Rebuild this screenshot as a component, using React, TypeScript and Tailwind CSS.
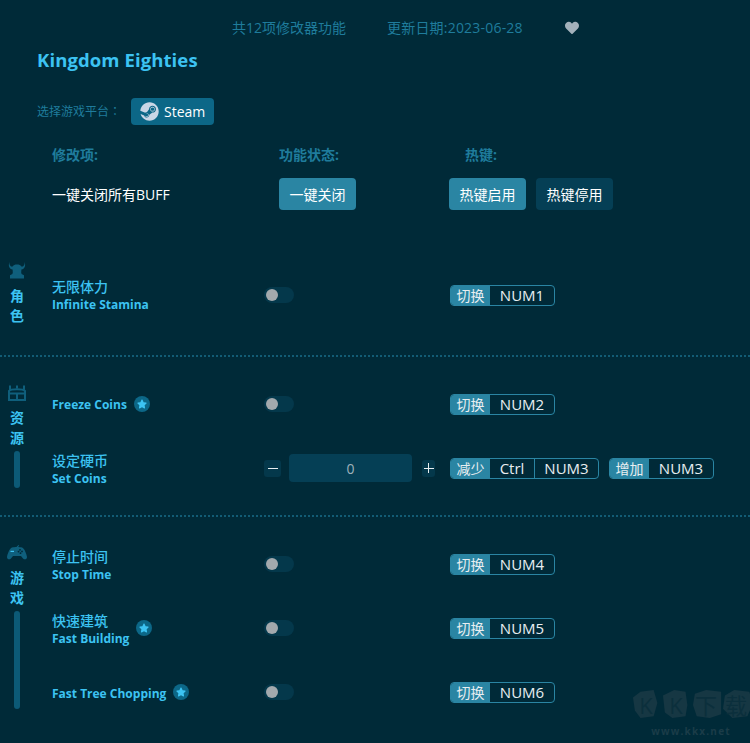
import React from "react";
import { FaSteam, FaHeart, FaStar } from "react-icons/fa";

const font = "font-['Open_Sans','Noto_Sans_CJK_SC',sans-serif]";

function Star() {
  return (
    <span className="flex h-4 w-4 shrink-0 items-center justify-center rounded-full bg-[#0c6787] text-[#3cc3f2]">
      <FaStar className="h-[10px] w-[10px]" />
    </span>
  );
}

function Toggle() {
  return (
    <div className="flex h-4 w-[30px] items-center rounded-full bg-[#04384b] pl-[2px]">
      <div className="h-3 w-3 rounded-full bg-[#a3a9ad]" />
    </div>
  );
}

function Hotkey({ label, keys }: { label: string; keys: { k: string; w: string }[] }) {
  return (
    <div className="flex h-[21px] overflow-hidden rounded-[4px] border border-[#2a85a3] text-[15px] leading-[19px] text-[#e8eef1]">
      <span className="w-[39px] bg-[#2a85a3] text-center text-[14px]">{label}</span>
      {keys.map((x, i) => (
        <span key={i} className={`${x.w} ${i > 0 ? "border-l border-[#2a85a3]" : ""} text-center`}>
          {x.k}
        </span>
      ))}
    </div>
  );
}

function Stepper() {
  return (
    <div className="flex items-center">
      <div className="flex h-[17px] w-[17px] items-center justify-center rounded-[3px] bg-[#04384b]">
        <div className="h-px w-[10px] bg-[#e8eef1]" />
      </div>
      <div className="ml-2 flex h-[28px] w-[123px] items-center justify-center rounded-[4px] bg-[#053f55] text-[14px] text-[#9fb2bb]">
        0
      </div>
      <div className="relative ml-[10px] flex h-[17px] w-[13px] items-center justify-center rounded-[3px] bg-[#04384b]">
        <div className="h-px w-[10px] bg-[#e8eef1]" />
        <div className="absolute h-[10px] w-px bg-[#e8eef1]" />
      </div>
    </div>
  );
}

function Row({
  cn,
  en,
  star,
  stepper,
  nudge,
  children,
}: {
  cn?: string;
  en: string;
  star?: boolean;
  stepper?: boolean;
  nudge?: boolean;
  children: React.ReactNode;
}) {
  return (
    <div className="flex h-16 items-center">
      <div className="flex w-[212px] items-center gap-[7px]">
        <div className={`text-[#3cc3f2] ${nudge ? "translate-y-px" : ""}`}>
          {cn && <div className="text-[14px] leading-[18px] font-medium">{cn}</div>}
          <div className="text-[12px] leading-[17px] font-bold">{en}</div>
        </div>
        {star && <Star />}
      </div>
      <div className="w-[186px]">{stepper ? <Stepper /> : <Toggle />}</div>
      <div className="flex gap-[10px]">{children}</div>
    </div>
  );
}

function HelmetIcon() {
  return (
    <svg width="18" height="17" viewBox="0 0 18 17" fill="#0f5f7c">
      <path d="M1.5 0 C1 2.5 2 4.2 4.2 4.8 C5.4 3.2 7 2.6 9 2.6 C11 2.6 12.6 3.2 13.8 4.8 C16 4.2 17 2.5 16.5 0 C18 3.5 16.8 7 13.4 7.6 L13.2 10.5 L13.6 12 L16 13.2 L16 16.5 L2 16.5 L2 13.2 L4.4 12 L4.8 10.5 L4.6 7.6 C1.2 7 0 3.5 1.5 0Z" />
    </svg>
  );
}

function ChestIcon() {
  return (
    <svg width="18" height="16" viewBox="0 0 18 16" fill="none" stroke="#0f5f7c" strokeWidth="2">
      <path d="M2 5 L2 0.5 M16 5 L16 0.5 M9 3.5 L9 0.5" />
      <path d="M1 6 C3 3.8 15 3.8 17 6 L17 15 L1 15 Z" />
      <path d="M1 8.5 L17 8.5 M9 8.5 L9 15" />
    </svg>
  );
}

function PadIcon() {
  return (
    <svg width="20" height="15" viewBox="0 0 20 15">
      <path fill="none" stroke="#0f5f7c" strokeWidth="1.2" d="M10 2.5 C10 1.5 11 1 12 0.5" />
      <path
        fill="#0f5f7c"
        d="M5 2.5 C7 1.7 13 1.7 15 2.5 C17.5 3.3 19.5 9 20 12 C20 14.5 17.5 15 16 13.5 L14 11 L6 11 L4 13.5 C2.5 15 0 14.5 0 12 C.5 9 2.5 3.3 5 2.5Z"
      />
      <rect x="3.5" y="5.8" width="3.5" height="1.2" fill="#3cc3f2" />
      <circle cx="13" cy="4.8" r="0.9" fill="#002a38" />
      <circle cx="15" cy="6.4" r="0.9" fill="#002a38" />
      <circle cx="11.5" cy="6.6" r="0.9" fill="#002a38" />
      <circle cx="13.5" cy="8.2" r="0.9" fill="#002a38" />
    </svg>
  );
}

function Section({
  icon,
  label,
  barClass,
  topClass,
  rowsClass,
  children,
}: {
  icon: React.ReactNode;
  label: string[];
  barClass?: string;
  topClass: string;
  rowsClass: string;
  children: React.ReactNode;
}) {
  return (
    <div className="flex">
      <div className={`flex w-[52px] shrink-0 flex-col ${topClass}`}>
        <div className="flex w-[34px] flex-col items-center">
          <div className="flex h-[17px] items-center">{icon}</div>
          <div className="mt-[7px] text-[14px] leading-[20px] font-bold text-[#3cc3f2]">
            {label.map((l) => (
              <div key={l}>{l}</div>
            ))}
          </div>
          {barClass && <div className={`mt-[3px] w-[6px] rounded-[3px] bg-[#0c5a76] ${barClass}`} />}
        </div>
      </div>
      <div className={rowsClass}>{children}</div>
    </div>
  );
}

function Divider() {
  return <div className="h-0.5 border-t-2 border-dotted border-[#125c75]" />;
}

function Watermark() {
  const stones = [
    { c: "K", p: "0,8 8,2 22,0 26,14 22,28 8,30 2,22" },
    { c: "K", p: "0,6 12,0 24,2 26,16 24,28 10,30 2,24" },
    { c: "下", p: "2,4 14,0 30,2 30,26 18,30 4,28 0,16" },
    { c: "载", p: "2,6 12,0 28,2 32,14 26,28 10,30 0,20" },
  ];
  return (
    <div className="absolute top-[689px] left-[633px] flex w-[116px] flex-col items-center">
      <div className="flex gap-[3px]">
        {stones.map((s, i) => (
          <div key={i} className="relative flex h-[31px] w-[27px] items-center justify-center">
            <svg className="absolute inset-0" width="30" height="31" viewBox="0 0 32 31">
              <polygon points={s.p} fill="#163743" />
            </svg>
            <span className="relative text-[22px] leading-none text-[#0b2f3c]">{s.c}</span>
          </div>
        ))}
      </div>
      <div className="mt-[5px] text-[10px] leading-[12px] font-bold tracking-[1.2px] text-[#1b3c48]">www.kkx.net</div>
    </div>
  );
}

export default function App() {
  return (
    <div className={`relative h-[743px] w-[750px] overflow-hidden bg-[#002a38] ${font}`}>
      <div className="flex h-[47px] items-start gap-[41px] pt-[18px] pl-[232px] text-[14px] leading-5 text-[#1f7c9c]">
        <span>共12项修改器功能</span>
        <div className="flex items-center gap-[42px]">
          <span className="tracking-[0.2px]">更新日期:2023-06-28</span>
          <FaHeart className="h-[14px] w-[14px] text-[#a3b1bb]" />
        </div>
      </div>

      <h1 className="h-[51px] pl-[37px] text-[18.5px] leading-[26px] font-bold tracking-[0.1px] text-[#3cc3f2]">
        Kingdom Eighties
      </h1>

      <div className="flex h-[27px] items-center pl-[37px]">
        <span className="w-[94px] text-[12px] text-[#1f7c9c]">
          选择游戏平台<span className="font-['Noto_Sans_CJK_TC']">：</span>
        </span>
        <div className="flex h-[27px] w-[83px] items-center gap-[5px] rounded-[4px] bg-[#0c6787] pl-[9px] text-[14px] text-white">
          <FaSteam className="h-[19px] w-[19px] text-[#c9d6e6]" />
          <span>Steam</span>
        </div>
      </div>

      <div className="mt-[20px] flex h-[20px] items-center pl-[52px] text-[14px] leading-5 font-bold text-[#1f7c9c]">
        <span className="w-[227px]">修改项:</span>
        <span className="w-[186px]">功能状态:</span>
        <span>热键:</span>
      </div>

      <div className="mt-[13px] flex h-8 items-center pl-[52px] text-[14px] text-white">
        <span className="w-[227px]">一键关闭所有BUFF</span>
        <button className="h-8 w-[77px] rounded-[4px] bg-[#2a85a3]">一键关闭</button>
        <button className="ml-[93px] h-8 w-[77px] rounded-[4px] bg-[#2a85a3]">热键启用</button>
        <button className="ml-[10px] h-8 w-[77px] rounded-[4px] bg-[#053f55]">热键停用</button>
      </div>

      <div className="mt-[24px]">
        <Section icon={<HelmetIcon />} label={["角", "色"]} topClass="pt-[28px]" rowsClass="h-[121px] pt-[29px]">
          <Row cn="无限体力" en="Infinite Stamina">
            <Hotkey label="切换" keys={[{ k: "NUM1", w: "w-[64px]" }]} />
          </Row>
        </Section>
        <Divider />
        <Section
          icon={<ChestIcon />}
          label={["资", "源"]}
          barClass="h-[37px]"
          topClass="pt-[27px]"
          rowsClass="h-[158px] pt-[15px]"
        >
          <Row en="Freeze Coins" star>
            <Hotkey label="切换" keys={[{ k: "NUM2", w: "w-[64px]" }]} />
          </Row>
          <Row cn="设定硬币" en="Set Coins" stepper nudge>
            <Hotkey label="减少" keys={[{ k: "Ctrl", w: "w-[44px]" }, { k: "NUM3", w: "w-[64px]" }]} />
            <Hotkey label="增加" keys={[{ k: "NUM3", w: "w-[64px]" }]} />
          </Row>
        </Section>
        <Divider />
        <Section
          icon={<PadIcon />}
          label={["游", "戏"]}
          barClass="h-[98px]"
          topClass="pt-[27px]"
          rowsClass="pt-[15px]"
        >
          <Row cn="停止时间" en="Stop Time" nudge>
            <Hotkey label="切换" keys={[{ k: "NUM4", w: "w-[64px]" }]} />
          </Row>
          <Row cn="快速建筑" en="Fast Building" star nudge>
            <Hotkey label="切换" keys={[{ k: "NUM5", w: "w-[64px]" }]} />
          </Row>
          <Row en="Fast Tree Chopping" star nudge>
            <Hotkey label="切换" keys={[{ k: "NUM6", w: "w-[64px]" }]} />
          </Row>
        </Section>
      </div>
      <Watermark />
    </div>
  );
}
